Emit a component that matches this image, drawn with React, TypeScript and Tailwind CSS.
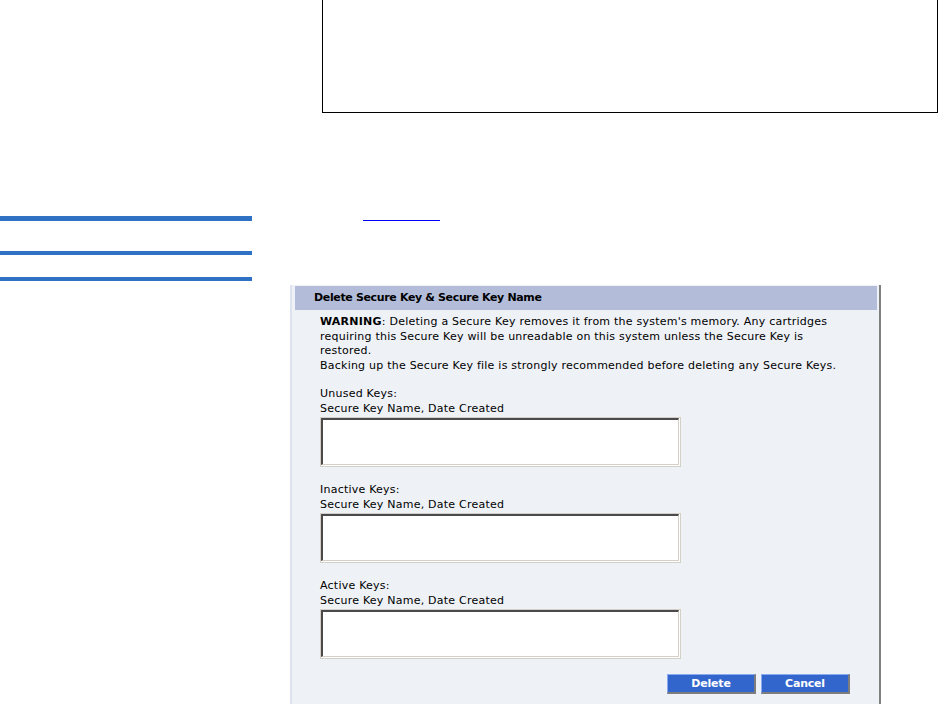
const font = "font-['DejaVu_Sans',Verdana,sans-serif]";

function KeyList({ title }: { title: string }) {
  return (
    <div className="flex flex-col">
      <div className="leading-[14.5px]">{title}</div>
      <div className="leading-[14.5px]">Secure Key Name, Date Created</div>
      {/* inset list box */}
      <div className="mt-px w-[361px] h-[50px] border border-[#d4d0c8] bg-white">
        <div className="h-full border-r border-b border-white">
          <div className="h-full border-t-2 border-l-2 border-t-[#4a4a4a] border-l-[#4a4a4a] border-r border-b border-r-[#d4d0c8] border-b-[#d4d0c8] bg-white" />
        </div>
      </div>
    </div>
  );
}

function Btn({ label }: { label: string }) {
  return (
    <button className="w-[89px] h-[20px] bg-[#3366cc] border-t border-l border-t-[#8aaaf0] border-l-[#8aaaf0] border-r-2 border-b-2 border-r-[#7d7d7d] border-b-[#7d7d7d] text-white font-bold text-[11px] tracking-[-0.2px] leading-none">
      {label}
    </button>
  );
}

export default function App() {
  return (
    <div className={`h-[704px] w-[939px] overflow-hidden bg-white text-black ${font}`}>
      {/* note box at top */}
      <div className="ml-[322px] w-[616px] h-[113px] border border-black border-t-0" />

      {/* rules + link */}
      <div className="flex mt-[103px]">
        <div className="w-[252px] flex flex-col">
          <div className="h-[5px] bg-[#2f72c4]" />
          <div className="h-[4px] mt-[30px] bg-[#2f72c4]" />
          <div className="h-[4px] mt-[22px] bg-[#2f72c4]" />
        </div>
        <div className="ml-[111px] mt-[4px] w-[77px] h-px bg-[#0000ff]" />
      </div>

      {/* dialog panel */}
      <div className="ml-[290px] mt-[4px] w-[591px] h-[420px] border-l-2 border-l-[#dce2ee] border-r-2 border-r-[#808080] bg-[#eef1f6] pt-px pl-[3px] pr-[2px] text-[11px]">
        <div className="h-[24px] bg-[#b3bdd9] flex items-center pl-[19px] font-bold tracking-[-0.35px]">
          Delete Secure Key &amp; Secure Key Name
        </div>
        <div className="pl-[25px] pt-[5px] pr-[20px] tracking-[0.23px]">
          <p className="leading-[14.6px]">
            <span className="font-bold">WARNING</span>: Deleting a Secure Key removes it from the system's memory. Any cartridges requiring this Secure Key will be unreadable on this system unless the Secure Key is restored.
            <br />
            Backing up the Secure Key file is strongly recommended before deleting any Secure Keys.
          </p>
          <div className="mt-[14px] flex flex-col gap-[16px]">
            <KeyList title="Unused Keys:" />
            <KeyList title="Inactive Keys:" />
            <KeyList title="Active Keys:" />
          </div>
          <div className="mt-[15px] flex justify-end gap-[5px] pr-[7px]">
            <Btn label="Delete" />
            <Btn label="Cancel" />
          </div>
        </div>
      </div>
    </div>
  );
}
